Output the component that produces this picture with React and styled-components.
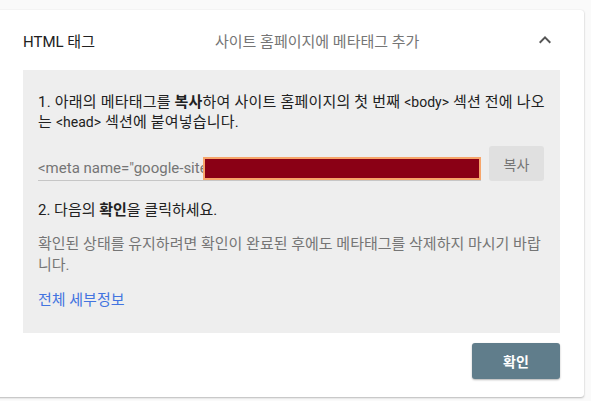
import React from "react";
import styled, { createGlobalStyle } from "styled-components";

const Global = createGlobalStyle`
  html, body { margin: 0; padding: 0; background: #ffffff; }
  body { font-family: Roboto, "Noto Sans CJK KR", sans-serif; }
  * { box-sizing: border-box; }
`;

const Page = styled.div`
  width: 591px;
  height: 401px;
  padding: 10px 7px 4px 0;
  background: #fafafa;
`;

const Card = styled.div`
  margin-left: -4px;
  height: 387px;
  background: #fff;
  border-radius: 0 3px 3px 0;
  box-shadow: 0 1px 2px rgba(0,0,0,0.25), 0 0 1px rgba(0,0,0,0.12);
  padding: 0 24px 0 27px;
  display: flex;
  flex-direction: column;
`;

const Header = styled.div`
  height: 60px;
  display: grid;
  grid-template-columns: 192px 1fr 30px;
  align-items: center;
  font-size: 15px;
`;

const Title = styled.div`
  color: #212121;
`;

const Subtitle = styled.div`
  color: #757575;
`;

const Chevron = styled.div`
  display: flex;
  justify-content: center;
`;

const Panel = styled.div`
  background: #eeeeee;
  padding: 22px 15px 20px 15px;
  height: 263px;
  display: flex;
  flex-direction: column;
  font-size: 15px;
  line-height: 20px;
  color: #212121;
`;

const Para = styled.p`
  margin: 0;
  letter-spacing: ${p => (p.$wide ? "0.2px" : "normal")};
  line-height: ${p => (p.$muted ? 21 : 20)}px;
  color: ${p => (p.$muted ? "#757575" : "#212121")};
  margin-bottom: ${p => p.$mb || 0}px;
`;

const Code = styled.span`
  font-size: 14px;
  letter-spacing: 0;
`;

const InputRow = styled.div`
  display: flex;
  align-items: flex-end;
  gap: 8px;
  margin-top: 14px;
  margin-bottom: 19px;
`;

const Field = styled.div`
  position: relative;
  width: 443px;
  height: 35px;
  border-bottom: 1px solid #c6c6c6;
  color: #757575;
  font-size: 15px;
  display: flex;
  align-items: flex-end;
  padding-bottom: 2px;
  overflow: hidden;
  white-space: nowrap;
`;

const Redact = styled.div`
  position: absolute;
  left: 165px;
  top: 11px;
  width: 278px;
  height: 23px;
  background: #8a0015;
  border: 2px solid #f7a56a;
`;

const CopyButton = styled.button`
  width: 55px;
  height: 35px;
  border: none;
  border-radius: 3px;
  background: #e0e0e0;
  color: #757575;
  font-family: inherit;
  font-size: 14px;
`;

const Link = styled.a`
  color: #4374e0;
  text-decoration: none;
  margin-top: 14px;
`;

const Footer = styled.div`
  display: flex;
  justify-content: flex-end;
  padding-top: 10px;
`;

const ConfirmButton = styled.button`
  width: 88px;
  height: 36px;
  border: none;
  border-radius: 3px;
  background: #607d8b;
  color: #fff;
  font-family: inherit;
  font-weight: 700;
  font-size: 14px;
  box-shadow: 0 1px 2px rgba(0,0,0,0.3);
`;

export default function App() {
  return (
    <>
      <Global />
      <Page>
        <Card>
          <Header>
            <Title>HTML 태그</Title>
            <Subtitle>사이트 홈페이지에 메타태그 추가</Subtitle>
            <Chevron>
              <svg width="12" height="8" viewBox="0 0 12 8">
                <path d="M1.4 7.4 L6 2.8 L10.6 7.4 L12 6 L6 0 L0 6 Z" fill="#555" />
              </svg>
            </Chevron>
          </Header>
          <Panel>
            <Para $wide>
              1. 아래의 메타태그를 <b>복사</b>하여 사이트 홈페이지의 첫 번째 <Code>&lt;body&gt;</Code> 섹션 전에 나오는 <Code>&lt;head&gt;</Code> 섹션에 붙여넣습니다.
            </Para>
            <InputRow>
              <Field>
                &lt;meta name="google-site-verification" content="xxxxxxxxxxxxxxxx" /&gt;
                <Redact />
              </Field>
              <CopyButton>복사</CopyButton>
            </InputRow>
            <Para $mb={14}>
              2. 다음의 <b>확인</b>을 클릭하세요.
            </Para>
            <Para $muted>
              확인된 상태를 유지하려면 확인이 완료된 후에도 메타태그를 삭제하지 마시기 바랍니다.
            </Para>
            <Link href="#">전체 세부정보</Link>
          </Panel>
          <Footer>
            <ConfirmButton>확인</ConfirmButton>
          </Footer>
        </Card>
      </Page>
    </>
  );
}
